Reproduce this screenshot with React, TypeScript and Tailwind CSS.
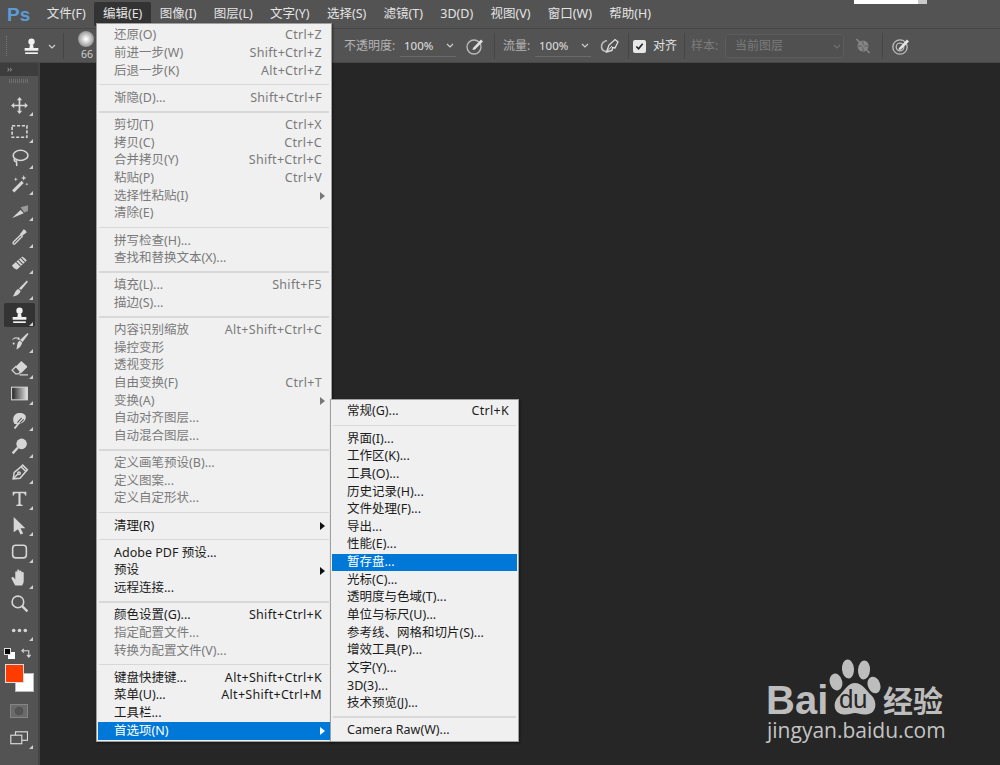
import React from 'react';

const FONT = "font-['Noto_Sans','Noto_Sans_CJK_SC',sans-serif]";

type MenuRow = { label: string; keys?: string; off?: boolean; arrow?: boolean; active?: boolean } | 'sep';

const editMenu: MenuRow[] = [
  { label: '还原(O)', keys: 'Ctrl+Z', off: true },
  { label: '前进一步(W)', keys: 'Shift+Ctrl+Z', off: true },
  { label: '后退一步(K)', keys: 'Alt+Ctrl+Z', off: true },
  'sep',
  { label: '渐隐(D)...', keys: 'Shift+Ctrl+F', off: true },
  'sep',
  { label: '剪切(T)', keys: 'Ctrl+X', off: true },
  { label: '拷贝(C)', keys: 'Ctrl+C', off: true },
  { label: '合并拷贝(Y)', keys: 'Shift+Ctrl+C', off: true },
  { label: '粘贴(P)', keys: 'Ctrl+V', off: true },
  { label: '选择性粘贴(I)', off: true, arrow: true },
  { label: '清除(E)', off: true },
  'sep',
  { label: '拼写检查(H)...', off: true },
  { label: '查找和替换文本(X)...', off: true },
  'sep',
  { label: '填充(L)...', keys: 'Shift+F5', off: true },
  { label: '描边(S)...', off: true },
  'sep',
  { label: '内容识别缩放', keys: 'Alt+Shift+Ctrl+C', off: true },
  { label: '操控变形', off: true },
  { label: '透视变形', off: true },
  { label: '自由变换(F)', keys: 'Ctrl+T', off: true },
  { label: '变换(A)', off: true, arrow: true },
  { label: '自动对齐图层...', off: true },
  { label: '自动混合图层...', off: true },
  'sep',
  { label: '定义画笔预设(B)...', off: true },
  { label: '定义图案...', off: true },
  { label: '定义自定形状...', off: true },
  'sep',
  { label: '清理(R)', arrow: true },
  'sep',
  { label: 'Adobe PDF 预设...' },
  { label: '预设', arrow: true },
  { label: '远程连接...' },
  'sep',
  { label: '颜色设置(G)...', keys: 'Shift+Ctrl+K' },
  { label: '指定配置文件...', off: true },
  { label: '转换为配置文件(V)...', off: true },
  'sep',
  { label: '键盘快捷键...', keys: 'Alt+Shift+Ctrl+K' },
  { label: '菜单(U)...', keys: 'Alt+Shift+Ctrl+M' },
  { label: '工具栏...' },
  { label: '首选项(N)', arrow: true, active: true },
];

const prefsMenu: MenuRow[] = [
  { label: '常规(G)...', keys: 'Ctrl+K' },
  'sep',
  { label: '界面(I)...' },
  { label: '工作区(K)...' },
  { label: '工具(O)...' },
  { label: '历史记录(H)...' },
  { label: '文件处理(F)...' },
  { label: '导出...' },
  { label: '性能(E)...' },
  { label: '暂存盘...', active: true },
  { label: '光标(C)...' },
  { label: '透明度与色域(T)...' },
  { label: '单位与标尺(U)...' },
  { label: '参考线、网格和切片(S)...' },
  { label: '增效工具(P)...' },
  { label: '文字(Y)...' },
  { label: '3D(3)...' },
  { label: '技术预览(J)...' },
  'sep',
  { label: 'Camera Raw(W)...' },
];

const menuBar = ['文件(F)', '编辑(E)', '图像(I)', '图层(L)', '文字(Y)', '选择(S)', '滤镜(T)', '3D(D)', '视图(V)', '窗口(W)', '帮助(H)'];

const Menu = ({ rows, indent }: { rows: MenuRow[]; indent: string }) => (
  <div className="flex flex-col bg-[#f0f0f0] border border-[#a0a0a0] pt-[3px] pb-[1px] px-[1px] text-[12.5px] shadow-[1px_1px_2px_rgba(0,0,0,0.45)]">
    {rows.map((row, i) =>
      row === 'sep' ? (
        <div key={i} className="h-[9.55px] flex items-center px-[1px]">
          <div className="h-[1.5px] w-full bg-[#d8d8d8]" />
        </div>
      ) : (
        <div
          key={i}
          className={`h-[17.65px] flex items-center justify-between pr-[8px] relative whitespace-nowrap ${indent} ${row.active ? 'bg-[#0078d7] text-white' : row.off ? 'text-[#7a7a7a]' : 'text-[#1c1c1c]'}`}
        >
          <span>{row.label}</span>
          {row.keys && <span className="tracking-[0.3px]">{row.keys}</span>}
          {row.arrow && (
            <svg viewBox="0 0 5 8" className="absolute right-[5px] top-[5px] w-[5px] h-[8px]">
              <path d="M0 0L5 4L0 8Z" fill={row.active ? '#fff' : row.off ? '#777' : '#111'} />
            </svg>
          )}
        </div>
      )
    )}
  </div>
);

const Corner = () => (
  <svg viewBox="0 0 4 4" className="absolute right-[5px] bottom-[2px] w-[4px] h-[4px]">
    <path d="M4 0V4H0Z" fill="#cfcfcf" />
  </svg>
);

const c = '#d6d6d6';
const toolIcons: { node: React.ReactNode; corner?: boolean; selected?: boolean }[] = [
  { corner: true, node: <path d="M9 1L6.5 4H8.2V8.2H4V6.5L1 9L4 11.5V9.8H8.2V14H6.5L9 17L11.5 14H9.8V9.8H14V11.5L17 9L14 6.5V8.2H9.8V4H11.5Z" fill={c} /> },
  { corner: true, node: <rect x="2" y="3.5" width="14" height="11" fill="none" stroke={c} strokeWidth="1.5" strokeDasharray="3 1.6" /> },
  { corner: true, node: <g fill="none" stroke={c} strokeWidth="1.5"><ellipse cx="10" cy="7" rx="7" ry="4.8" /><path d="M4.5 10C3 12 5 13 6 12.5C6.5 14 6 15.5 6.5 17" /></g> },
  { corner: true, node: <g fill={c}><path d="M2 15.5L11 6.5L13 8.5L4 17.5Z" /><path d="M13 1L13.7 3L15.5 3.7L13.7 4.4L13 6.4L12.3 4.4L10.5 3.7L12.3 3ZM5.5 3L6 4.4L7.4 5L6 5.5L5.5 7L5 5.5L3.6 5L5 4.4ZM16 8L16.4 9.2L17.6 9.6L16.4 10L16 11.2L15.6 10L14.4 9.6L15.6 9.2Z" /></g> },
  { corner: true, node: <g fill={c}><path d="M2 16L10 8.5L13 11.5L4 15.5Z" /><path d="M10 6L17 4L17 9.5L13.5 11Z" fill="#9a9a9a" /></g> },
  { corner: true, node: <g><path d="M3 14.5L10 7.5L11.5 9L4.5 16C3.6 16.6 2.4 15.4 3 14.5Z" fill="none" stroke={c} strokeWidth="1.3" /><path d="M9.5 6.5L11 5L12.5 2.5C13.5 1.5 16.5 4.5 15.5 5.5L13 7L11.5 8.5Z" fill={c} /></g> },
  { corner: true, node: <g><path d="M2 11.5L11.5 3.5C12 3 15.5 6 15.8 7L7 15.5C6 16.2 1.8 13 2 11.5Z" fill={c} /><path d="M6 8.5L10 12.5M8.3 6.5L12 10.5M10.5 4.7L14 8.5" stroke="#535353" strokeWidth="1" /></g> },
  { corner: true, node: <g fill={c}><path d="M16 1.5L17 2.5L10.5 10.5L8.5 9Z" /><path d="M8 9.5L10 11.3C9.5 14 6 16.5 2.5 16.5C4.5 15 4.5 10.5 8 9.5Z" /></g> },
  { corner: true, selected: true, node: <g fill="#f0f0f0"><circle cx="9" cy="4.5" r="3" /><path d="M7.5 7H10.5L11 10.5H15.5V13H2.5V10.5H7Z" /><rect x="3" y="14.5" width="12" height="1.6" /></g> },
  { corner: true, node: <g fill={c}><path d="M16.5 1L17.5 2L12 9.5L9.5 7.5Z" /><path d="M9 8L11.5 10C11 13 8.5 16 6 16.5C7 14 6 11 9 8Z" /><path d="M2 8C3 5 5.5 4.5 8 5.5L8.5 4.5L9.5 7L7 7.5L7.5 6.5C6 6 4 6 2 8Z" /><circle cx="3.5" cy="11" r="1" /></g> },
  { corner: true, node: <g><path d="M2 11.5L10 3.5C10.5 3 11 3 11.5 3.5L16 7.5C16.5 8 16.5 8.5 16 9L10.5 14.5H6Z" fill={c} /><path d="M5.5 8L10 13L8 15H5.5L2 11.5Z" fill="#535353" stroke={c} strokeWidth="1.2" /><path d="M9 16H17" stroke={c} strokeWidth="1.2" /></g> },
  { corner: true, node: <g><defs><linearGradient id="grad" x1="0" x2="1" y1="0" y2="0"><stop offset="0" stopColor="#222" /><stop offset="1" stopColor="#e5e5e5" /></linearGradient></defs><rect x="1.5" y="3" width="15" height="12" fill="url(#grad)" stroke={c} strokeWidth="1" /></g> },
  { corner: true, node: <g fill={c}><path d="M4 12C2 8 3 3 8 2C12 1.5 15 3 15 6C15 9 12 12 9 12L5 17L3.5 16L6.5 12.5Z" /><path d="M7 11L11 6.5M9.5 11.5L13 8" stroke="#535353" strokeWidth="1" /></g> },
  { corner: true, node: <g><circle cx="11" cy="6.5" r="5" fill={c} /><path d="M7.5 10L2.5 15.5" stroke={c} strokeWidth="2.2" /></g> },
  { corner: true, node: <g fill="none" stroke={c} strokeWidth="1.4"><path d="M3 15L4 9L10.5 3.5L15 8L9.5 14.5Z" /><circle cx="8.5" cy="9.8" r="1.2" /><path d="M3 15L7.5 10.5M10.5 3.5L12 2L16.5 6.5L15 8" /></g> },
  { corner: true, node: <path d="M2.5 2.5H15.5V6.2H14.2C14 4.8 13.5 4 12.5 4H10V14C10 14.8 10.5 15 12 15V16H6V15C7.5 15 8 14.8 8 14V4H5.5C4.5 4 4 4.8 3.8 6.2H2.5Z" fill={c} /> },
  { corner: true, node: <path d="M3.5 1L14.5 11.5H10L12.5 16.5L10 17.5L7.6 12.5L3.5 15.5Z" fill={c} /> },
  { corner: true, node: <rect x="2.5" y="3" width="13" height="12" rx="3" fill="none" stroke={c} strokeWidth="1.5" /> },
  { corner: true, node: <path d="M5 16.5C3.5 14 2 11.5 1.5 10C1 8.5 3 8 4 9.5L5 11V4C5 2.8 6.6 2.8 6.8 4V2.5C6.8 1.2 8.6 1.2 8.8 2.5V3.2C9 2 10.8 2 11 3.2V4.5C11.2 3.5 13 3.5 13 4.8V12C13 14 12.2 15.5 11.5 16.5Z" fill={c} /> },
  { node: <g fill="none" stroke={c}><circle cx="7.5" cy="7.5" r="5.5" strokeWidth="1.5" /><path d="M11.5 11.5L16.5 16.5" strokeWidth="2.2" /></g> },
  { corner: true, node: <g fill={c}><circle cx="3.5" cy="9" r="1.7" /><circle cx="9" cy="9" r="1.7" /><circle cx="14.5" cy="9" r="1.7" /></g> },
];

const Toolbar = () => (
  <div className="w-[40px] shrink-0 flex flex-col bg-[#535353] border-r-[2px] border-[#454545]">
    <div className="h-[13px] bg-[#3d3d3d] text-[#b0b0b0] text-[8px] leading-[11px] pl-[7px]">››</div>
    <div className="h-[16px] flex items-start justify-center pt-[3px]">
      <div className="w-[20px] h-[4px] bg-[repeating-linear-gradient(90deg,#6e6e6e_0,#6e6e6e_1px,transparent_1px,transparent_2px)]" />
    </div>
    {toolIcons.map((t, i) => (
      <div key={i} className="h-[26.25px] shrink-0 flex items-center justify-center relative">
        <div className={`w-[31px] h-[24px] flex items-center justify-center rounded-[2px] ${t.selected ? 'bg-[#333333]' : ''}`}>
          <svg viewBox="0 0 18 18" className="w-[19px] h-[19px]">{t.node}</svg>
        </div>
        {t.corner && <Corner />}
      </div>
    ))}
    {/* default / swap colours */}
    <div className="h-[21px] flex items-center justify-between px-[4px] shrink-0">
      <div className="relative w-[11px] h-[11px]">
        <div className="absolute left-[4px] top-[4px] w-[7px] h-[7px] bg-white" />
        <div className="absolute left-0 top-0 w-[7px] h-[7px] bg-black border border-[#ddd]" />
      </div>
      <svg viewBox="0 0 12 12" className="w-[11px] h-[11px] mr-[2px]">
        <path d="M1 3H8.5V9M6.5 7.5L8.5 10L10.5 7.5M3 1L1 3L3 5" fill="none" stroke="#d6d6d6" strokeWidth="1.2" />
      </svg>
    </div>
    <div className="relative h-[33px] shrink-0">
      <div className="absolute left-[15px] top-[9px] w-[19px] h-[19px] bg-white border border-[#bbb]" />
      <div className="absolute left-[5px] top-0 w-[19px] h-[19px] bg-[#ff3c00] border border-[#ddd]" />
    </div>
    <div className="h-[27px] shrink-0 flex items-center justify-center">
      <div className="w-[18px] h-[14px] border border-[#858585] bg-[#6a6a6a] flex items-center justify-center">
        <div className="w-[8px] h-[8px] rounded-full border border-dotted border-[#444] bg-[#555]" />
      </div>
    </div>
    <div className="h-[27px] shrink-0 flex items-center justify-center relative">
      <svg viewBox="0 0 18 14" className="w-[18px] h-[14px]">
        <rect x="5.5" y="0.8" width="12" height="8.5" fill="none" stroke="#d6d6d6" strokeWidth="1.2" />
        <rect x="0.8" y="4.2" width="11" height="8.5" fill="#535353" stroke="#d6d6d6" strokeWidth="1.2" />
      </svg>
      <Corner />
    </div>
  </div>
);

const Chevron = ({ color = '#cfcfcf' }: { color?: string }) => (
  <svg viewBox="0 0 8 5" className="w-[8px] h-[5px] shrink-0">
    <path d="M1 1L4 4L7 1" fill="none" stroke={color} strokeWidth="1.2" />
  </svg>
);

const Divider = () => <div className="w-px h-[26px] bg-[#464646] shrink-0" />;

const PercentDrop = () => (
  <div className="w-[56px] h-[22px] flex items-center justify-between border-b border-[#6b6b6b] pl-[4px] pr-[2px] text-[11.5px] text-[#e0e0e0] shrink-0">
    <span>100%</span>
    <Chevron />
  </div>
);

const OptionsBar = () => (
  <div className="h-[35px] shrink-0 flex items-center bg-[#535353] border-t border-b border-[#474747] text-[12px] pt-[1px]">
    <div className="w-[6px] shrink-0" />
    <div className="w-px h-[20px] border-l border-dotted border-[#777] shrink-0" />
    <div className="w-[56px] shrink-0 flex items-center pl-[15px] gap-[7px]">
      <svg viewBox="0 0 18 18" className="w-[19px] h-[19px] shrink-0">
        <g fill="#f0f0f0"><circle cx="9" cy="4.5" r="3" /><path d="M7.5 7H10.5L11 10.5H15.5V13H2.5V10.5H7Z" /><rect x="3" y="14.5" width="12" height="1.6" /></g>
      </svg>
      <Chevron />
    </div>
    <Divider />
    <div className="w-[268px] shrink-0 flex flex-col items-start pl-[14px] -mt-[1px]">
      <div className="w-[16px] h-[16px] rounded-full bg-[radial-gradient(circle,#ffffff_5%,#b0b0b0_55%,#5a5a5a_100%)]" />
      <span className="text-[10.5px] leading-[12px] text-[#d0d0d0] mt-[1px] pl-[3px]">66</span>
    </div>
    <span className="text-[#b4b4b4] ml-[12px] w-[52px] shrink-0 whitespace-nowrap">不透明度:</span>
    <div className="w-[4px] shrink-0" />
    <PercentDrop />
    <div className="w-[9px] shrink-0" />
    <svg viewBox="0 0 20 20" className="w-[20px] h-[20px] shrink-0">
      <circle cx="9" cy="11" r="7" fill="none" stroke="#bdbdbd" strokeWidth="1.3" />
      <path d="M8 12L16 3.5L18 5.5L10 13.5L7.5 14Z" fill="#e0e0e0" />
    </svg>
    <div className="w-[9px] shrink-0" />
    <Divider />
    <span className="text-[#b4b4b4] ml-[8px] w-[28px] shrink-0 whitespace-nowrap">流量:</span>
    <div className="w-[4px] shrink-0" />
    <PercentDrop />
    <div className="w-[9px] shrink-0" />
    <svg viewBox="0 0 20 20" className="w-[20px] h-[20px] shrink-0">
      <path d="M7 4.5C3 5.5 1.5 8 1.5 10.5C1.5 13 3 15 6 15.5" fill="none" stroke="#bdbdbd" strokeWidth="1.6" />
      <path d="M6.5 16L9 9L15 3.5L18 6L15 12L12.5 11.5L12 14.5Z" fill="none" stroke="#e0e0e0" strokeWidth="1.3" />
      <path d="M6.5 16L12 10" stroke="#e0e0e0" strokeWidth="1" />
    </svg>
    <div className="w-[8px] shrink-0" />
    <Divider />
    <div className="ml-[4px] w-[13px] h-[13px] bg-[#e8e8e8] rounded-[2px] flex items-center justify-center shrink-0">
      <svg viewBox="0 0 10 10" className="w-[9px] h-[9px]"><path d="M1.5 5L4 7.5L8.5 2" fill="none" stroke="#222" strokeWidth="1.8" /></svg>
    </div>
    <span className="text-[#e4e4e4] ml-[7px] w-[24px] shrink-0 whitespace-nowrap">对齐</span>
    <div className="w-[7px] shrink-0" />
    <Divider />
    <span className="text-[#7b7b7b] ml-[6px] w-[28px] shrink-0 whitespace-nowrap">样本:</span>
    <div className="ml-[6px] w-[119px] h-[24px] border border-[#5c5c5c] bg-[#505050] rounded-[3px] flex items-center justify-between pl-[9px] pr-[2px] shrink-0">
      <span className="text-[#7b7b7b]">当前图层</span>
      <Chevron color="#707070" />
    </div>
    <div className="w-[9px] shrink-0" />
    <svg viewBox="0 0 20 20" className="w-[20px] h-[20px] shrink-0">
      <circle cx="10" cy="10" r="5.5" fill="#858585" />
      <path d="M5 10H15M10 5V15" stroke="#5f5f5f" strokeWidth="1" />
      <path d="M3.5 3L16.5 17" stroke="#858585" strokeWidth="1.6" />
    </svg>
    <div className="w-[9px] shrink-0" />
    <Divider />
    <div className="w-[8px] shrink-0" />
    <svg viewBox="0 0 20 20" className="w-[20px] h-[20px] shrink-0">
      <circle cx="9" cy="11" r="7.2" fill="none" stroke="#bdbdbd" strokeWidth="1.3" />
      <circle cx="9" cy="11" r="3.8" fill="none" stroke="#bdbdbd" strokeWidth="1.3" />
      <path d="M8 12L16 3.5L18 5.5L10 13.5L7.5 14Z" fill="#e6e6e6" />
    </svg>
  </div>
);

const BaiduMark = () => (
  <div className="absolute left-[766px] top-[659px] w-[200px] h-[90px] text-[#bdbdbd] select-none">
    <span className="absolute left-0 top-[26px] text-[40px] leading-[30px] font-bold font-['Liberation_Sans',sans-serif]">Bai</span>
    <svg viewBox="0 0 54 56" className="absolute left-[62px] top-0 w-[54px] h-[56px]">
      <g fill="#bdbdbd">
        <ellipse cx="8" cy="23" rx="6.2" ry="8.5" transform="rotate(-15 8 23)" />
        <ellipse cx="20" cy="10" rx="6" ry="9.5" transform="rotate(-4 20 10)" />
        <ellipse cx="36" cy="11" rx="6" ry="9.5" transform="rotate(4 36 11)" />
        <ellipse cx="46" cy="26" rx="6.2" ry="8.5" transform="rotate(-20 46 26)" />
        <path d="M27 24C34 24 38 31 44 37C50 44 48 55 38 55.5C33 56 30 54 27 54C24 54 21 56 16 55.5C6 55 4 45 10 38C16 32 20 24 27 24Z" />
      </g>
    </svg>
    <span className="absolute left-[73px] top-[25px] text-[26px] leading-[30px] text-[#262626] font-['Liberation_Sans',sans-serif] tracking-[-0.5px]">du</span>
    <span className="absolute left-[117px] top-[25px] text-[30px] leading-[30px] font-bold font-['Noto_Sans_CJK_SC',sans-serif] whitespace-nowrap">经验</span>
    <span className="absolute left-[1px] top-[60px] text-[21px] leading-[22px] text-[#c4c4c4] font-['Open_Sans',sans-serif] whitespace-nowrap">jingyan.baidu.com</span>
  </div>
);

export default function App() {
  return (
    <div className={`relative w-[1000px] h-[765px] overflow-hidden bg-[#262626] flex flex-col ${FONT}`}>
      {/* menu bar */}
      <div className="h-[28px] shrink-0 flex items-center bg-[#535353] text-[12.5px] text-[#e4e4e4] relative">
        <span className="w-[38px] pl-[7px] text-[19px] font-bold text-[#5c9bd6] leading-none font-['Liberation_Sans',sans-serif] shrink-0">Ps</span>
        <div className="flex items-center h-full">
          {menuBar.map((m, i) => (
            <div key={m} className={`px-[8.65px] h-[24px] flex items-center whitespace-nowrap ${i === 1 ? 'bg-[#333333] rounded-t-[2px]' : ''}`}>{m}</div>
          ))}
        </div>
        <div className="absolute left-[854px] top-0 w-[73px] h-[4px] bg-white border-r-[9px] border-[#c9c9c9]" />
      </div>
      <OptionsBar />
      <div className="flex-1 flex min-h-0">
        <Toolbar />
        <div className="flex-1 bg-[#262626]" />
      </div>

      <div className="absolute left-[96px] top-[23px] w-[236px]">
        <Menu rows={editMenu} indent="pl-[16px]" />
      </div>
      <div className="absolute left-[330px] top-[399px] w-[189px]">
        <Menu rows={prefsMenu} indent="pl-[15px]" />
      </div>
      <BaiduMark />
    </div>
  );
}
